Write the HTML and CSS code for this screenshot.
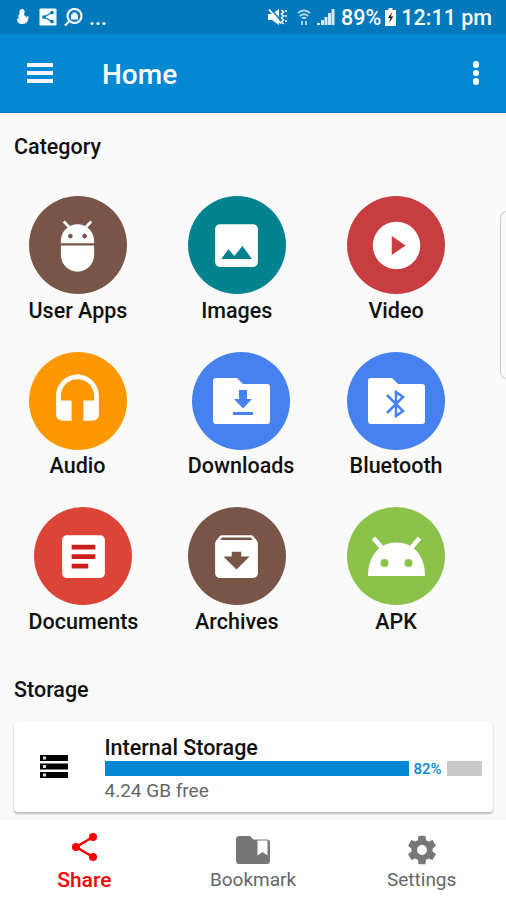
FILE: index.html
```html
<!DOCTYPE html>
<html>
	<head>
		<meta charset="UTF-8">
		<title>Home</title>
		<link rel="stylesheet" href="styles.css">
	</head>

	<body>
		<div class="screen">
			<div class="status">
				<div class="status-left">
					<svg width="13" height="18" viewBox="0 0 13 18"><path d="M6 1c2 0 3 1.500 2.500 3.500L8 7l1.500 1 .5 2 1-2 1.500 1c0 4-2 7-6 7C3 16 1 14 1 11l2-1-1-2 1.500-2C3 3 4 1 6 1z"/></svg>
					<svg class="share-box" width="18" height="18" viewBox="0 0 18 18"><path d="M1.500 0.500h15a1 1 0 0 1 1 1v15a1 1 0 0 1-1 1h-15a1 1 0 0 1-1-1v-15a1 1 0 0 1 1-1z"/><g class="cut"><path d="M13 4.500L5 9l8 4.500"/><circle cx="13" cy="4.500" r="1.200"/><circle cx="5" cy="9" r="1.200"/><circle cx="13" cy="13.500" r="1.200"/></g></svg>
					<svg class="lens" width="19" height="19" viewBox="0 0 19 19"><circle cx="10.500" cy="8" r="7"/><path d="M5.500 13L1 17.500"/><path class="solid" d="M7 6.500h7v5H7zM8.500 4.500h4v2h-4z"/></svg>
					<span class="more">...</span>
				</div>
				<div class="status-right">
					<svg class="mute" width="20" height="18" viewBox="0 0 20 18"><path d="M1 6h4l7-5v16l-7-5H1z"/><path class="slash" d="M3.500 1l10 11"/><path class="strike" d="M2 1.500l12 14"/><path class="wave" d="M14.500 2l2 2-2 2 2 2-2 2 2 2-2 2 2 2M19 2v2M19 7v2M19 12v2"/></svg>
					<svg class="wifi" width="14" height="17" viewBox="0 0 14 17"><path d="M1 4q6-5 12 0M3 7q4-3.500 8 0M5 9.500q2-1.500 4 0"/><path d="M5 12v4M9 12v4"/></svg>
					<svg class="signal" width="18" height="16" viewBox="0 0 18 16"><path d="M0 14h3v2H0zM4 11h3v5H4zM7.500 8h3v8h-3zM11 4h3v12h-3zM14.500 0h3v16h-3z"/></svg>
					<span class="percent">89%</span>
					<svg class="battery" width="11" height="18" viewBox="0 0 11 18"><path d="M3.500 0h4v2H11v16H0V2h3.500z"/><path class="bolt" d="M7 4L3 10h2.500L4 15l4.500-6.500H6z"/></svg>
					<span class="clock">12:11 pm</span>
				</div>
			</div>

			<div class="bar">
				<div class="menu">
					<span></span>
					<span></span>
					<span></span>
				</div>
				<div class="title">Home</div>
				<div class="dots">
					<span></span>
					<span></span>
					<span></span>
				</div>
			</div>

			<div class="content">
				<div class="heading">Category</div>
				<div class="category">
					<div class="item">
						<div class="circle brown">
							<svg class="icon" viewBox="0 0 24 24"><path d="M5 16c0 3.870 3.130 7 7 7s7-3.130 7-7v-4H5v4zM16.120 4.370l2.100-2.100-.82-.83-2.300 2.310C14.160 3.280 13.120 3 12 3s-2.160.28-3.090.75L6.600 1.440l-.82.83 2.100 2.100C6.140 5.640 5 7.680 5 10v1h14v-1c0-2.320-1.140-4.360-2.880-5.630zM9 9c-.55 0-1-.45-1-1s.45-1 1-1 1 .45 1 1-.45 1-1 1zm6 0c-.55 0-1-.45-1-1s.45-1 1-1 1 .45 1 1-.45 1-1 1z"/></svg>
						</div>
						<div class="name">User Apps</div>
					</div>
					<div class="item">
						<div class="circle teal">
							<svg class="icon" viewBox="0 0 24 24"><path fill-rule="evenodd" d="M5 3h14a2 2 0 0 1 2 2v14a2 2 0 0 1-2 2H5a2 2 0 0 1-2-2V5a2 2 0 0 1 2-2zM5.600 17.700h12.900l-4-5.500-3.400 4.200-2.500-2.800z"/></svg>
						</div>
						<div class="name">Images</div>
					</div>
					<div class="item">
						<div class="circle red">
							<svg class="icon" viewBox="0 0 24 24"><path fill-rule="evenodd" d="M12 2a10 10 0 1 0 0 20 10 10 0 0 0 0-20zM10 16V8l5.800 4z"/></svg>
						</div>
						<div class="name">Video</div>
					</div>
					<div class="item">
						<div class="circle orange">
							<svg class="icon" viewBox="0 0 24 24"><path d="M12 1c-4.970 0-9 4.030-9 9v8c0 1.660 1.340 2.500 3 2.500h3.500v-8.500H5v-2c0-3.870 3.130-7 7-7s7 3.130 7 7v2h-4.500v8.500h3.500c1.660 0 3-.84 3-2.500v-8c0-4.970-4.030-9-9-9z"/></svg>
						</div>
						<div class="name">Audio</div>
					</div>
					<div class="item">
						<div class="circle blue">
							<svg class="folder" viewBox="0 0 57 46"><path d="M3 0h21l6 6h24a3 3 0 0 1 3 3v34a3 3 0 0 1-3 3H3a3 3 0 0 1-3-3V3a3 3 0 0 1 3-3z"/><path class="mark" d="M26 12h8v9h5l-9 9.500-9-9.500h5zM20 34h20v3H20z"/></svg>
						</div>
						<div class="name">Downloads</div>
					</div>
					<div class="item">
						<div class="circle blue">
							<svg class="folder" viewBox="0 0 57 46"><path d="M3 0h21l6 6h24a3 3 0 0 1 3 3v34a3 3 0 0 1-3 3H3a3 3 0 0 1-3-3V3a3 3 0 0 1 3-3z"/><path class="rune" d="M19 17l16 16-7 5V14l7 5-16 16"/></svg>
						</div>
						<div class="name">Bluetooth</div>
					</div>
					<div class="item">
						<div class="circle tomato">
							<svg class="icon" viewBox="0 0 24 24"><path d="M19 3H5c-1.100 0-2 .9-2 2v14c0 1.100.9 2 2 2h14c1.100 0 2-.9 2-2V5c0-1.100-.9-2-2-2z"/><path class="lines" d="M7 7h10v2H7zM7 11h10v2H7zM7 15h7v2H7z"/></svg>
						</div>
						<div class="name">Documents</div>
					</div>
					<div class="item">
						<div class="circle brown">
							<svg class="icon" viewBox="0 0 24 24"><path d="M20.540 5.230l-1.390-1.680C18.880 3.210 18.470 3 18 3H6c-.47 0-.88.21-1.160.55L3.460 5.230C3.170 5.570 3 6.020 3 6.500V19c0 1.100.9 2 2 2h14c1.100 0 2-.9 2-2V6.500c0-.48-.17-.93-.46-1.270zM12 17.500L6.500 12H10v-2h4v2h3.500L12 17.500zM5.120 5l.81-1h12l.94 1H5.120z"/></svg>
						</div>
						<div class="name">Archives</div>
					</div>
					<div class="item">
						<div class="circle green">
							<svg class="robot" viewBox="0 0 57 40"><path d="M0 40C0 19 12 6.500 28.500 6.500S57 19 57 40z"/><path class="feeler" d="M5.500 2l8 9.500M51.500 2l-8 9.500"/><circle cx="16.500" cy="27" r="4"/><circle cx="40.500" cy="27" r="4"/></svg>
						</div>
						<div class="name">APK</div>
					</div>
				</div>

				<div class="heading storage-heading">Storage</div>
				<div class="card">
					<svg class="disk" width="28" height="23" viewBox="0 0 28 23"><path d="M0 0h28v6H0zM0 8.500h28v6H0zM0 17h28v6H0z"/><path class="led" d="M3 1.500h3v3H3zM3 10h3v3H3zM3 18.500h3v3H3z"/></svg>
					<div class="info">
						<div class="disk-name">Internal Storage</div>
						<div class="progress">
							<div class="used"></div>
							<span class="value">82%</span>
							<div class="rest"></div>
						</div>
						<div class="free">4.24 GB free</div>
					</div>
				</div>
			</div>

			<div class="tabs">
				<div class="tab active">
					<svg width="26" height="28" viewBox="0 0 26 28"><path class="link" d="M21 4L4 14l17 10"/><circle cx="21" cy="4" r="4"/><circle cx="4" cy="14" r="4"/><circle cx="21" cy="24" r="4"/></svg>
					<span>Share</span>
				</div>
				<div class="tab">
					<svg width="34" height="28" viewBox="0 0 34 28"><path fill-rule="evenodd" d="M3 0h11l3.500 3.500H31a3 3 0 0 1 3 3V25a3 3 0 0 1-3 3H3a3 3 0 0 1-3-3V3a3 3 0 0 1 3-3zM21.500 4.500v15l5-3.500 5 3.500v-15z"/></svg>
					<span>Bookmark</span>
				</div>
				<div class="tab gear">
					<svg width="34" height="34" viewBox="0 0 24 24"><path d="M19.430 12.980c.04-.32.07-.64.07-.98s-.03-.66-.07-.98l2.110-1.650c.19-.15.24-.42.12-.64l-2-3.460c-.12-.22-.39-.3-.61-.22l-2.490 1c-.52-.4-1.080-.73-1.690-.98l-.38-2.650C14.460 2.180 14.250 2 14 2h-4c-.25 0-.46.18-.49.42l-.38 2.650c-.61.25-1.170.59-1.690.98l-2.490-1c-.23-.09-.49 0-.61.22l-2 3.460c-.13.22-.07.49.12.64l2.110 1.650c-.04.32-.07.65-.07.98s.03.66.07.98l-2.110 1.650c-.19.15-.24.42-.12.64l2 3.460c.12.22.39.3.61.22l2.490-1c.52.4 1.080.73 1.690.98l.38 2.650c.03.24.24.42.49.42h4c.25 0 .46-.18.49-.42l.38-2.650c.61-.25 1.170-.59 1.690-.98l2.490 1c.23.09.49 0 .61-.22l2-3.460c.12-.22.07-.49-.12-.64l-2.110-1.650zM12 15.500c-1.930 0-3.500-1.570-3.500-3.500s1.570-3.500 3.500-3.500 3.500 1.570 3.500 3.500-1.570 3.500-3.500 3.500z"/></svg>
					<span>Settings</span>
				</div>
			</div>
			<div class="edge"></div>
		</div>
	</body>
</html>
```
FILE: styles.css
```css
body {
	margin: 0;
	font-family: Roboto, "Liberation Sans", sans-serif;
	font-weight: 500;
	color: #111;
}

.screen {
	width: 506px;
	height: 900px;
	position: relative;
	overflow: hidden;
	display: flex;
	flex-direction: column;
	background: #fafafa;
}

svg {
	display: block;
	fill: #fff;
}

.status {
	height: 34px;
	box-sizing: border-box;
	padding: 0 14px 0 16px;
	display: flex;
	justify-content: space-between;
	align-items: center;
	background: #0079bc;
	color: #fff;
	font-size: 21.5px;
}

.status-left,
.status-right {
	display: flex;
	align-items: center;
}

.share-box {
	margin-left: 10px;
}

.cut {
	fill: #0079bc;
	stroke: #0079bc;
	stroke-width: 1.3;
}

.share-box .cut path {
	fill: none;
}

.lens {
	margin-left: 7px;
	fill: none;
	stroke: #fff;
	stroke-width: 2.2;
}

.lens .solid {
	fill: #fff;
	stroke: none;
}

.more {
	margin-left: 6px;
}

.mute .slash {
	stroke: #0079bc;
	stroke-width: 1.5;
}

.mute .strike {
	stroke: #fff;
	stroke-width: 1.8;
}

.mute .wave {
	fill: none;
	stroke: #fff;
	stroke-width: 1.5;
}

.wifi {
	margin-left: 10px;
	fill: none;
	stroke: #b5d8ee;
	stroke-width: 1.8;
}

.signal {
	margin-left: 6px;
	fill: #d5e9f5;
}

.percent {
	margin-left: 6px;
}

.battery {
	margin-left: 4px;
}

.battery .bolt {
	fill: #222;
}

.clock {
	margin-left: 5px;
}

.bar {
	height: 79px;
	box-sizing: border-box;
	padding: 0 27px 0 27px;
	display: flex;
	align-items: center;
	background: #0488d1;
	border-bottom: 1px solid #0779ba;
	color: #fff;
}

.menu {
	width: 26px;
	display: flex;
	flex-direction: column;
	gap: 4px;
}

.menu span {
	height: 4px;
	background: #f2f4ff;
}

.title {
	flex: 1;
	margin-left: 49px;
	padding-top: 3px;
	font-size: 28px;
}

.dots {
	display: flex;
	flex-direction: column;
	gap: 2px;
}

.dots span {
	width: 6.5px;
	height: 6.5px;
	border-radius: 50%;
	background: #fff;
}

.content {
	height: 707px;
	box-sizing: border-box;
	padding: 21px 13px 0 14px;
}

.heading {
	height: 26px;
	line-height: 26px;
	font-size: 21.5px;
}

.category {
	margin: 36px 0 0 14.5px;
	display: grid;
	grid-template-columns: repeat(3, 159.3px);
	grid-template-rows: repeat(3, 155.7px);
	justify-items: start;
}

.item {
	display: flex;
	flex-direction: column;
	align-items: center;
}

.circle {
	width: 98px;
	height: 98px;
	border-radius: 50%;
	display: flex;
	justify-content: center;
	align-items: center;
}

.name {
	margin-top: 3.5px;
	line-height: 26px;
	font-size: 21.5px;
}

.brown {
	background: #795548;
}

.teal {
	background: #00838f;
}

.red {
	background: #c83d3f;
}

.orange {
	background: #ff9800;
}

.blue {
	background: #4681f0;
}

.tomato {
	background: #db4437;
}

.green {
	background: #8bc34a;
}

.icon {
	width: 57px;
	height: 57px;
}

.lines {
	fill: #cb2017;
}

.folder {
	width: 57px;
	height: 46px;
}

.mark {
	fill: #4681f0;
}

.rune {
	fill: none;
	stroke: #4681f0;
	stroke-width: 2.5;
}

.robot {
	width: 57px;
	height: 40px;
}

.feeler {
	stroke: #fff;
	stroke-width: 4.5;
}

.robot circle {
	fill: #8bc34a;
}

.storage-heading {
	margin-top: 14px;
}

.card {
	height: 90px;
	margin-top: 19px;
	box-sizing: border-box;
	padding: 12px 11px 0 26px;
	display: flex;
	background: #fff;
	border-radius: 4px;
	box-shadow: 0 2px 2px #bbb, 0 0 1px #ccc;
}

.disk {
	margin-top: 21px;
	fill: #000;
}

.disk .led {
	fill: #ddd;
}

.info {
	flex: 1;
	margin-left: 36.5px;
}

.disk-name {
	height: 27px;
	line-height: 27px;
	font-size: 21.5px;
}

.progress {
	height: 15px;
	display: flex;
	align-items: center;
}

.used {
	width: 304px;
	height: 15px;
	background: #0488d1;
}

.value {
	width: 38px;
	text-align: center;
	font-size: 15px;
	color: #0488d1;
}

.rest {
	flex: 1;
	height: 15px;
	background: #c9c9c9;
}

.free {
	margin-top: 2px;
	line-height: 25px;
	font-size: 19px;
	font-weight: 400;
	color: #666;
}

.tabs {
	height: 80px;
	display: grid;
	grid-template-columns: repeat(3, 1fr);
	background: #fff;
}

.tab {
	display: flex;
	flex-direction: column;
	align-items: center;
	justify-content: flex-end;
	padding-bottom: 8px;
	font-size: 19px;
	font-weight: 400;
	line-height: 24px;
	color: #666;
}

.tab svg {
	margin-bottom: 4px;
	fill: #777;
}

.gear svg {
	margin-bottom: 1px;
}

.tab.active {
	font-size: 21px;
	font-weight: 500;
	color: #f00;
}

.tab.active svg {
	margin: 0 0 7px 2px;
	fill: #f00;
}

.link {
	fill: none;
	stroke: #f00;
	stroke-width: 2.5;
}

.edge {
	width: 12px;
	height: 166px;
	position: absolute;
	top: 211px;
	left: 500px;
	border: 1px solid #ccc;
	border-radius: 8px;
}
```
